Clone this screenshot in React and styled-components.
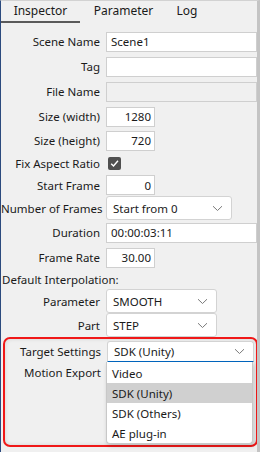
import React from "react";
import styled, { createGlobalStyle } from "styled-components";

const GlobalStyle = createGlobalStyle`
  html, body {
    margin: 0;
    padding: 0;
    background: #f0f0f0;
  }
  * {
    box-sizing: border-box;
  }
`;

const Window = styled.div`
  width: 260px;
  height: 452px;
  display: flex;
  flex-direction: column;
  background: #f0f0f0;
  border-left: 1px solid #2b4a7e;
  border-right: 3px solid #c4c4c4;
  border-top: 1px solid #d2d2d2;
  font-family: "Noto Sans", "Open Sans", sans-serif;
  font-size: 11.5px;
  color: #1a1a1a;
  overflow: hidden;
`;

const TabBar = styled.div`
  display: flex;
  height: 22px;
  flex-shrink: 0;
  font-size: 12px;
`;

const Tab = styled.div`
  width: ${(p) => p.w}px;
  display: flex;
  align-items: center;
  justify-content: center;
  border-bottom: 2px solid ${(p) => (p.active ? "#5a5a5a" : "transparent")};
  padding-bottom: 1px;
`;

const Form = styled.div`
  display: flex;
  flex-direction: column;
  padding-top: 6px;
`;

const Row = styled.div`
  display: flex;
  align-items: center;
  height: ${(p) => p.h}px;
  flex-shrink: 0;
`;

const Label = styled.div`
  width: 99px;
  text-align: right;
  white-space: nowrap;
  margin-right: 6px;
`;

const Section = styled.div`
  padding-left: 1px;
  white-space: nowrap;
`;

const Input = styled.div`
  width: ${(p) => (p.w ? `${p.w}px` : "auto")};
  flex: ${(p) => (p.w ? "none" : "1")};
  height: 20px;
  display: flex;
  align-items: center;
  justify-content: ${(p) => (p.right ? "flex-end" : "flex-start")};
  padding: 0 3px 0 4px;
  background: ${(p) => (p.disabled ? "#f0f0f0" : "#ffffff")};
  border: 1px solid #cfcfcf;
`;

const Select = styled.div`
  width: ${(p) => p.w}px;
  height: ${(p) => p.h || 24}px;
  display: flex;
  align-items: center;
  justify-content: space-between;
  padding: 0 8px 0 6px;
  background: #ffffff;
  border: 1px solid #d3d3d3;
  border-bottom: 1px solid ${(p) => (p.focus ? "#0067c0" : "#d3d3d3")};
  border-radius: ${(p) => (p.focus ? "3px 3px 0 0" : "3px")};
`;

const Check = styled.div`
  width: 13px;
  height: 13px;
  margin-left: 2px;
  border-radius: 2px;
  background: #4f4f4f;
  display: flex;
  align-items: center;
  justify-content: center;
`;

const Highlight = styled.div`
  position: relative;
  margin: 0 0 0 2px;
  width: 255px;
  height: 110px;
  border: 2px solid #f01818;
  border-radius: 7px;
  box-shadow: inset 0 0 4px rgba(0, 0, 0, 0.12);
  padding-top: 2px;
`;

const InnerRow = styled.div`
  display: flex;
  align-items: center;
  height: ${(p) => p.h}px;
  margin-left: -3px;
`;

const Menu = styled.div`
  position: absolute;
  left: 101px;
  top: 23px;
  width: 147px;
  background: #ffffff;
  border: 1px solid #c8c8c8;
  border-top: none;
  border-radius: 0 0 4px 4px;
  box-shadow: 1px 2px 4px rgba(0, 0, 0, 0.18);
  padding-top: 1px;
`;

const MenuItem = styled.div`
  height: 20px;
  display: flex;
  align-items: center;
  padding-left: 5px;
  background: ${(p) => (p.selected ? "#d0d0d0" : "transparent")};
`;

const Chevron = () => (
  <svg width="11" height="7" viewBox="0 0 11 7">
    <path d="M1 1.2 L5.5 5.5 L10 1.2" fill="none" stroke="#7a7a7a" strokeWidth="1" />
  </svg>
);

const Tick = () => (
  <svg width="11" height="11" viewBox="0 0 11 11">
    <path d="M2.2 5.8 L4.5 8 L9 2.8" fill="none" stroke="#ffffff" strokeWidth="1.4" />
  </svg>
);

export default function App() {
  return (
    <>
      <GlobalStyle />
      <Window>
        <TabBar>
          <Tab w={79} active>Inspector</Tab>
          <Tab w={87}>Parameter</Tab>
          <Tab w={40}>Log</Tab>
        </TabBar>
        <Form>
          <Row h={25}>
            <Label>Scene Name</Label>
            <Input>Scene1</Input>
          </Row>
          <Row h={25}>
            <Label>Tag</Label>
            <Input />
          </Row>
          <Row h={25}>
            <Label>File Name</Label>
            <Input disabled />
          </Row>
          <Row h={25}>
            <Label>Size (width)</Label>
            <Input w={49} right>1280</Input>
          </Row>
          <Row h={23}>
            <Label>Size (height)</Label>
            <Input w={49} right>720</Input>
          </Row>
          <Row h={22}>
            <Label>Fix Aspect Ratio</Label>
            <Check>
              <Tick />
            </Check>
          </Row>
          <Row h={22}>
            <Label>Start Frame</Label>
            <Input w={49} right>0</Input>
          </Row>
          <Row h={24}>
            <Label>Number of Frames</Label>
            <Select w={126}>
              Start from 0
              <Chevron />
            </Select>
          </Row>
          <Row h={25}>
            <Label>Duration</Label>
            <Input>00:00:03:11</Input>
          </Row>
          <Row h={25}>
            <Label>Frame Rate</Label>
            <Input w={49} right>30.00</Input>
          </Row>
          <Row h={19}>
            <Section>Default Interpolation:</Section>
          </Row>
          <Row h={24}>
            <Label>Parameter</Label>
            <Select w={111}>
              SMOOTH
              <Chevron />
            </Select>
          </Row>
          <Row h={24}>
            <Label>Part</Label>
            <Select w={111}>
              STEP
              <Chevron />
            </Select>
          </Row>
          <Highlight>
            <InnerRow h={20}>
              <Label>Target Settings</Label>
              <Select w={147} h={21} focus>
                SDK (Unity)
                <Chevron />
              </Select>
            </InnerRow>
            <InnerRow h={23}>
              <Label>Motion Export</Label>
            </InnerRow>
            <Menu>
              <MenuItem>Video</MenuItem>
              <MenuItem selected>SDK (Unity)</MenuItem>
              <MenuItem>SDK (Others)</MenuItem>
              <MenuItem>AE plug-in</MenuItem>
            </Menu>
          </Highlight>
        </Form>
      </Window>
    </>
  );
}
